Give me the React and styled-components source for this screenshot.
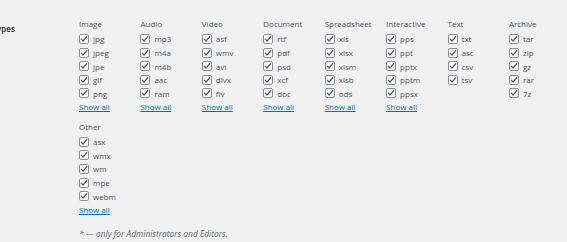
import React from "react";
import styled, { createGlobalStyle } from "styled-components";

const Global = createGlobalStyle`
  html, body { margin: 0; padding: 0; background: #f1f1f1; overflow: hidden; }
  body { font-family: "Open Sans", "Noto Sans", sans-serif; font-size: 8px; color: #50575e; }
`;

const Page = styled.div`
  display: flex;
  align-items: flex-start;
  padding-top: 18px;
  width: 567px;
  height: 242px;
  box-sizing: border-box;
`;

const Label = styled.div`
  flex: 0 0 100.5px;
  margin-left: -21.5px;
  padding-top: 5px;
  font-weight: 600;
  font-size: 8px;
  line-height: 12px;
  color: #23282d;
`;

const Content = styled.div`
  display: flex;
  flex-direction: column;
`;

const Groups = styled.div`
  display: grid;
  grid-template-columns: repeat(8, 61.43px);
  row-gap: 7px;
`;

const Group = styled.div`
  display: flex;
  flex-direction: column;
`;

const Heading = styled.div`
  line-height: 12px;
  margin-bottom: 2.2px;
  color: #50575e;
`;

const Item = styled.label`
  display: flex;
  align-items: center;
  height: 13.6px;
  color: #50575e;
`;

const Box = styled.span`
  box-sizing: border-box;
  width: 10px;
  height: 10px;
  border: 1px solid #8c8f94;
  border-radius: 2px;
  background: #fbfbfb;
  margin-right: 4px;
  display: flex;
  align-items: center;
  justify-content: center;
`;

const ShowAll = styled.a`
  display: flex;
  align-items: center;
  height: 13.6px;
  color: #0073aa;
  text-decoration: underline;
  cursor: pointer;
`;

const Footer = styled.div`
  margin-top: 11px;
  line-height: 12px;
  font-size: 8.4px;
  font-style: italic;
  color: #646970;
`;

const Check = () => (
  <svg width="8" height="8" viewBox="0 0 8 8">
    <path d="M1.3 4.1 L3.1 6 L6.8 1.6" fill="none" stroke="#50575e" strokeWidth="1.2" strokeLinecap="round" strokeLinejoin="round" />
  </svg>
);

const groups = [
  { name: "Image", items: ["jpg", "jpeg", "jpe", "gif", "png"], more: true },
  { name: "Audio", items: ["mp3", "m4a", "m4b", "aac", "ram"], more: true },
  { name: "Video", items: ["asf", "wmv", "avi", "divx", "flv"], more: true },
  { name: "Document", items: ["rtf", "pdf", "psd", "xcf", "doc"], more: true },
  { name: "Spreadsheet", items: ["xls", "xlsx", "xlsm", "xlsb", "ods"], more: true },
  { name: "Interactive", items: ["pps", "ppt", "pptx", "pptm", "ppsx"], more: true },
  { name: "Text", items: ["txt", "asc", "csv", "tsv"], more: false },
  { name: "Archive", items: ["tar", "zip", "gz", "rar", "7z"], more: false },
  { name: "Other", items: ["asx", "wmx", "wm", "mpe", "webm"], more: true },
];

export default function App() {
  return (
    <>
      <Global />
      <Page>
        <Label>File types</Label>
        <Content>
          <Groups>
            {groups.map((g) => (
              <Group key={g.name}>
                <Heading>{g.name}</Heading>
                {g.items.map((it) => (
                  <Item key={it}>
                    <Box><Check /></Box>
                    {it}
                  </Item>
                ))}
                {g.more && <ShowAll>Show all</ShowAll>}
              </Group>
            ))}
          </Groups>
          <Footer>* — only for Administrators and Editors.</Footer>
        </Content>
      </Page>
    </>
  );
}
